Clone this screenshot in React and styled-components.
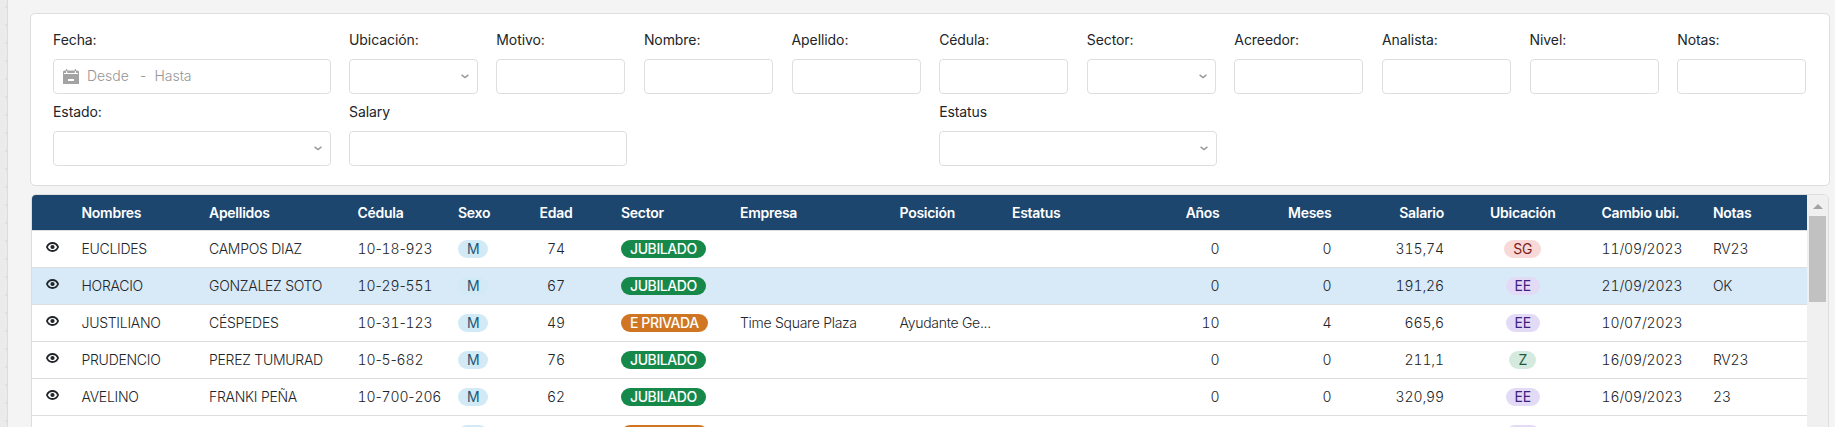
import styled, { createGlobalStyle } from 'styled-components'

const GlobalStyle = createGlobalStyle`
  * {
    box-sizing: border-box;
  }
  body {
    margin: 0;
    overflow: hidden;
    background: #f4f4f4;
    color: #212529;
    font-family: Inter, 'Liberation Sans', sans-serif;
    font-size: 14px;
  }
`

const Page = styled.div`
  display: flex;
  height: 427px;
  overflow: hidden;
`

const Gutter = styled.div`
  flex: 0 0 8px;
  border-right: 1px solid #dcdcdc;
  background: radial-gradient(circle at 6.5px 7px, #dadada 0.8px, transparent 1.3px) 0 0 / 8px 18px #ebebeb;
`

const Main = styled.div`
  width: 1800px;
  margin-left: 22px;
  padding-top: 13px;
`

const FilterCard = styled.div`
  display: grid;
  grid-template-columns: 148px 148px 147.3px repeat(9, 147.62px);
  grid-auto-rows: 72px;
  height: 173px;
  padding: 15px 0 0 22px;
  overflow: hidden;
  border: 1px solid #dedede;
  border-radius: 5px;
  background: #fff;
`

const Field = styled.div`
  grid-column: ${p => p.$start} / span ${p => (p.$wide ? 2 : 1)};
  width: ${p => (p.$wide ? 278 : 129)}px;
`

const Label = styled.label`
  display: block;
  height: 30px;
  line-height: 22px;
  letter-spacing: -0.08px;
`

const Input = styled.div`
  display: flex;
  align-items: center;
  justify-content: ${p => (p.$select ? 'flex-end' : 'flex-start')};
  height: 35px;
  padding: 0 8px 0 9px;
  border: 1px solid #dedede;
  border-radius: 4px;
`

const DateRange = styled.div`
  display: flex;
  padding: 0 0 1px 8px;
  color: #959595;
  font-weight: 300;
  line-height: 18px;
`

const Placeholder = styled.span`
  width: ${p => p.$width};
  letter-spacing: -0.05px;
`

const TableBox = styled.div`
  display: flex;
  width: 1798px;
  height: 260px;
  margin: 8px 0 0 1px;
  overflow: hidden;
  border: 1px solid #dedede;
  border-radius: 5px;
  background: #fff;
`

const Table = styled.div`
  width: 1775px;
`

const Row = styled.div`
  display: grid;
  grid-template-columns: 41.5px 127.5px 148.5px 100.5px 49px 114px 119px 159.5px 112.5px 111px 112.5px 112px 112.5px 141.5px 111.5px 102px;
  height: 37px;
  border-bottom: 1px solid #dedede;
  background: ${p => (p.$active ? '#d8e9f7' : '#fff')};
  font-weight: 300;
  line-height: 18px;
  letter-spacing: -0.28px;
`

const HeadRow = styled(Row)`
  height: 36px;
  background: #1d466f;
  color: #fff;
  font-weight: 600;
  line-height: 17px;
`

const Cell = styled.div`
  display: flex;
  align-items: center;
  justify-content: ${p => p.$align || 'flex-start'};
  padding: 0 8px;
  white-space: nowrap;
`

// only the digits are tabular, dashes and slashes keep their own width
const Digits = styled.span`
  font-variant-numeric: tabular-nums;
  letter-spacing: -0.1px;
`

const EyeCell = styled(Cell)`
  padding: 0 0 4px 14px;
`

const tones = {
  blue: ['#d2eaf6', '#1f5674'],
  green: ['#15884a', '#fff'],
  orange: ['#d07622', '#fff'],
  red: ['#f8d9d8', '#7d1d1b'],
  purple: ['#e3dbf5', '#3f2182'],
  mint: ['#d5eadf', '#22563d'],
}

const Badge = styled.span`
  height: 18px;
  padding: 0 9px;
  border-radius: 9px;
  background: ${p => tones[p.$tone][0]};
  color: ${p => tones[p.$tone][1]};
  font-weight: ${p => (p.$strong ? 500 : 400)};
  line-height: 18px;
  letter-spacing: ${p => (p.$strong ? '-0.4px' : '-0.28px')};
`

const Scrollbar = styled.div`
  display: flex;
  flex: 1;
  flex-direction: column;
  align-items: center;
  background: #f0f0f0;
`

const Arrow = styled.div`
  width: 0;
  margin: 9px 0 7px;
  border: solid transparent;
  border-width: 0 5px 5px;
  border-bottom-color: #a3a3a3;
`

const Thumb = styled.div`
  width: 17px;
  height: 86px;
  background: #c1c1c1;
`

function Chevron() {
  return (
    <svg width="8" height="5" viewBox="0 0 8 5" fill="none" stroke="#999" strokeWidth="1.5">
      <path d="M.6.8 4 3.6 7.4.8" />
    </svg>
  )
}

function Calendar() {
  return (
    <svg width="16" height="15" viewBox="0 0 16 15">
      <path fill="#a3a3a3" d="M3 0h1.200v1.500h7.600V0H13v1.500h1.500A1.500 1.500 0 0 1 16 3v12H0V3a1.500 1.500 0 0 1 1.500-1.500H3z" />
      <path fill="#fff" d="M1 4h14v1H1zM3 2.300h1.200v1.700H3zM11.800 2.300H13v1.700h-1.200zM5 10h6v2H5z" />
    </svg>
  )
}

function Eye() {
  return (
    <svg width="13" height="10" viewBox="0 0 13 10">
      <path d="M.9 5C2 2.300 4 1 6.500 1S11 2.300 12.100 5C11 7.700 9 9 6.500 9S2 7.700.9 5Z" fill="none" stroke="#212529" strokeWidth="1.8" />
      <circle cx="6.500" cy="5" r="2.100" fill="#212529" />
    </svg>
  )
}

const filters = [
  { label: 'Fecha:', start: 1, wide: true, date: true },
  { label: 'Ubicación:', start: 3, select: true },
  { label: 'Motivo:', start: 4 },
  { label: 'Nombre:', start: 5 },
  { label: 'Apellido:', start: 6 },
  { label: 'Cédula:', start: 7 },
  { label: 'Sector:', start: 8, select: true },
  { label: 'Acreedor:', start: 9 },
  { label: 'Analista:', start: 10 },
  { label: 'Nivel:', start: 11 },
  { label: 'Notas:', start: 12 },
  { label: 'Estado:', start: 1, wide: true, select: true },
  { label: 'Salary', start: 3, wide: true },
  { label: 'Estatus', start: 7, wide: true, select: true },
]

const columns = [
  ['Nombres'], ['Apellidos'], ['Cédula'], ['Sexo'], ['Edad', 'center'], ['Sector'], ['Empresa'],
  ['Posición'], ['Estatus'], ['Años', 'flex-end'], ['Meses', 'flex-end'], ['Salario', 'flex-end'],
  ['Ubicación', 'center'], ['Cambio ubi.'], ['Notas'],
]

const people = [
  ['EUCLIDES', 'CAMPOS DIAZ', '10-18-923', 'M', '74', 'JUBILADO', '', '', '', '0', '0', '315,74', 'SG', '11/09/2023', 'RV23'],
  ['HORACIO', 'GONZALEZ SOTO', '10-29-551', 'M', '67', 'JUBILADO', '', '', '', '0', '0', '191,26', 'EE', '21/09/2023', 'OK'],
  ['JUSTILIANO', 'CÉSPEDES', '10-31-123', 'M', '49', 'E PRIVADA', 'Time Square Plaza', 'Ayudante Ge...', '', '10', '4', '665,6', 'EE', '10/07/2023', ''],
  ['PRUDENCIO', 'PEREZ TUMURAD', '10-5-682', 'M', '76', 'JUBILADO', '', '', '', '0', '0', '211,1', 'Z', '16/09/2023', 'RV23'],
  ['AVELINO', 'FRANKI PEÑA', '10-700-206', 'M', '62', 'JUBILADO', '', '', '', '0', '0', '320,99', 'EE', '16/09/2023', '23'],
  ['', '', '', 'M', '', 'E PRIVADA', '', '', '', '', '', '', 'EE', '', ''],
]

const badgeTones = { M: 'blue', JUBILADO: 'green', 'E PRIVADA': 'orange', SG: 'red', EE: 'purple', Z: 'mint' }

function Value({ value }) {
  if (badgeTones[value]) {
    return <Badge $tone={badgeTones[value]} $strong={value.length > 2}>{value}</Badge>
  }
  return (
    <span>
      {value.split(/(\d+)/).map((part, i) => (i % 2 ? <Digits key={i}>{part}</Digits> : part))}
    </span>
  )
}

function App() {
  return (
    <>
      <GlobalStyle />
      <Page>
        <Gutter />
        <Main>
          <FilterCard>
            {filters.map(f => (
              <Field key={f.label} $start={f.start} $wide={f.wide}>
                <Label>{f.label}</Label>
                <Input $select={f.select}>
                  {f.date && (
                    <>
                      <Calendar />
                      <DateRange>
                        <Placeholder $width="53px">Desde</Placeholder>
                        <Placeholder $width="14.5px">-</Placeholder>
                        <Placeholder>Hasta</Placeholder>
                      </DateRange>
                    </>
                  )}
                  {f.select && <Chevron />}
                </Input>
              </Field>
            ))}
          </FilterCard>
          <TableBox>
            <Table>
              <HeadRow>
                <Cell />
                {columns.map(([name, align], i) => (
                  <Cell key={i} $align={align}>{name}</Cell>
                ))}
              </HeadRow>
              {people.map((person, r) => (
                <Row key={r} $active={r === 1}>
                  <EyeCell>{person[0] && <Eye />}</EyeCell>
                  {person.map((value, i) => (
                    <Cell key={i} $align={columns[i][1]}>
                      <Value value={value} />
                    </Cell>
                  ))}
                </Row>
              ))}
            </Table>
            <Scrollbar>
              <Arrow />
              <Thumb />
            </Scrollbar>
          </TableBox>
        </Main>
      </Page>
    </>
  )
}

export default App
